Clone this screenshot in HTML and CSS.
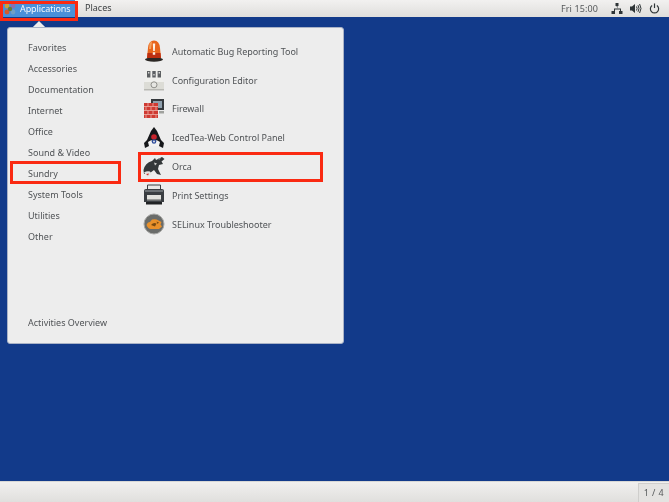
FILE: index.html
```html
<!DOCTYPE html>
<html lang="en">
<head>
<meta charset="utf-8">
<title>GNOME Applications menu</title>
<link rel="stylesheet" href="styles.css">
</head>
<body>
<div class="desktop">
  <header class="topbar">
    <div class="panel-left">
      <div class="apps-button">
        <svg class="foot" viewBox="0 0 12 12" width="12" height="12"><circle cx="3" cy="3" r="2.400" fill="#c9a13c"/><circle cx="9" cy="3" r="2.400" fill="#8a6fb0"/><circle cx="3" cy="9" r="2.400" fill="#d7592e"/><circle cx="9" cy="9" r="2.400" fill="#6fa0c8"/><circle cx="6" cy="6" r="2.200" fill="#6b7a3a"/></svg>
        <span class="apps-label">Applications</span>
      </div>
      <span class="places">Places</span>
    </div>
    <div class="panel-right">
      <span class="clock">Fri 15:00</span>
      <svg class="status net" viewBox="0 0 12 11" width="12" height="11"><path d="M4.500 0h3v3h-3zM5.500 3h1v2.500h3.500V8h-1V6.500h-5V8h-1V5.500h3.500zM0.500 8h3.500v3H.5zM8 8h3.500v3H8z" fill="#2e3436"/></svg>
      <svg class="status vol" viewBox="0 0 12 11" width="12" height="11"><path d="M0 3.500h2L5 1v9L2 7.500H0z" fill="#2e3436"/><path d="M6.500 3.500q1.200 2 0 4M8 2.200q2 3.300 0 6.600M9.600 1q2.800 4.500 0 9" fill="none" stroke="#2e3436" stroke-width="1"/></svg>
      <svg class="status power" viewBox="0 0 12 12" width="11" height="11"><path d="M3.400 2.700a4.500 4.500 0 1 0 5.200 0" fill="none" stroke="#2e3436" stroke-width="1.300"/><path d="M6 .5v5" stroke="#2e3436" stroke-width="1.300"/></svg>
    </div>
  </header>

  <main class="workspace">
    <div class="menu-arrow"></div>
    <section class="menu">
      <nav class="categories">
        <ul class="category-list">
          <li>Favorites</li>
          <li>Accessories</li>
          <li>Documentation</li>
          <li>Internet</li>
          <li>Office</li>
          <li>Sound &amp; Video</li>
          <li>Sundry</li>
          <li>System Tools</li>
          <li>Utilities</li>
          <li>Other</li>
        </ul>
        <div class="overview">Activities Overview</div>
      </nav>
      <ul class="apps">
        <li>
          <svg viewBox="0 0 22 22" width="22" height="22"><ellipse cx="11" cy="19.500" rx="9" ry="2.200" fill="#2b2724"/><path d="M4 18 5 8q.6-7.500 6-7.500T17 8l1 10z" fill="#e8651c"/><path d="M4 18l.5-5h13l.5 5z" fill="#bd2f10"/><path d="M6.500 3.500Q8 1.500 9 1.500L8 9H6z" fill="#f6a05a"/><path d="M9.800 3.500h2.400l-.4 7.500h-1.600zM9.800 12.300h2.400v2.400H9.800z" fill="#fdf2e6"/></svg>
          <span>Automatic Bug Reporting Tool</span>
        </li>
        <li>
          <svg viewBox="0 0 22 22" width="22" height="22"><path d="M3 0.500h16l1 13H2z" fill="#efefec"/><path d="M1 13h20v7.500H1z" fill="#dcdcd6"/><path d="M1 20h20v1.500H1z" fill="#b9b9b4"/><path d="M4 2h3.400v6.500H4zM9.300 2h3.400v6.500H9.300zM14.600 2h3.400v6.500h-3.400z" fill="#5c5f62"/><path d="M5 3h1.400v1.500H5zM10.300 5h1.400v1.500h-1.400zM15.600 3h1.400v1.500h-1.400z" fill="#d8d8d5"/><circle cx="11" cy="15.800" r="3" fill="#e6e6e2" stroke="#8f8f8a" stroke-width="1"/></svg>
          <span>Configuration Editor</span>
        </li>
        <li>
          <svg viewBox="0 0 22 22" width="22" height="22"><path d="M8 1h13v11H8z" fill="#34383c"/><path d="M10 3h9v7h-9z" fill="#8fa0ae"/><path d="M16 13h5v2.500h-5z" fill="#a0a29e"/><path d="M1 5h14v15H1z" fill="#cf3a32"/><path d="M1 8.500h14M1 12.500h14M1 16.500h14M5 5v3.500M10 5v3.500M3 8.500v4M8 8.500v4M13 8.500v4M5 12.500v4M10 12.500v4M3 16.500v3.500M8 16.500v3.500M13 16.500v3.500" stroke="#eeb0a8" stroke-width=".8" fill="none"/></svg>
          <span>Firewall</span>
        </li>
        <li>
          <svg viewBox="0 0 22 22" width="22" height="22"><path d="M2 21 1 16l3-3 4-9 3-4 3 4 4 9 3 3-1 5-4-2H6z" fill="#15171a"/><path d="M5 15q6-5 12 0l-1 4H6z" fill="#f2f2f2"/><path d="M7 9.500q4-2 8 0l1 3q-5 2-10 0z" fill="#1a1c20"/><circle cx="11" cy="10" r="2.800" fill="#c8242c"/><circle cx="11" cy="14.500" r="2.300" fill="#2b4a9a"/><circle cx="11" cy="14.500" r=".9" fill="#f2f2f2"/></svg>
          <span>IcedTea-Web Control Panel</span>
        </li>
        <li>
          <svg viewBox="0 0 22 22" width="22" height="22"><path d="M.5 14Q2 7 9 5l3-3 1 2 6-3 2.500 2-3 2.500L20 8l-4 1-1 4 3 6-4-1-3-4-4 3-6 1z" fill="#34383a"/><path d="M1 16.500q3-2 6-1l2 3-5 2z" fill="#e6e6e4"/><path d="M3 18l3-.5-1 2z" fill="#c8302c"/><path d="M11 6.500l3 1-2 2z" fill="#cfcfcd"/><path d="M15 2.500l3-.5-2 2z" fill="#8a8e90"/></svg>
          <span>Orca</span>
        </li>
        <li>
          <svg viewBox="0 0 22 22" width="22" height="22"><path d="M4.500 1h13v6h-13z" fill="#e8e8e6" stroke="#3a3e40" stroke-width="1"/><path d="M1 6.500q0-1.500 2-1.500h16q2 0 2 1.500V18H1z" fill="#3a3e42"/><path d="M2 6h18v2H2z" fill="#6b7074"/><path d="M4 11h14v4H4z" fill="#e2e2de"/><path d="M4 15h14v1.500H4z" fill="#9a9c9a"/><path d="M3 18h16v2.500H3z" fill="#202224"/></svg>
          <span>Print Settings</span>
        </li>
        <li>
          <svg viewBox="0 0 22 22" width="22" height="22"><circle cx="11" cy="11" r="10" fill="#6a6c6a" stroke="#a8a8a6" stroke-width="1"/><path d="M3.500 12q1-3 3.500-3l2-2.500q4-1 6.500 1L18.500 9l-1 2.500 1.500 2-3 2.500H8q-3 0-4.500-4z" fill="#e9902a"/><path d="M8 12q2.500-3 5.500-1.500L12 13.500z" fill="#7a4a10"/><path d="M13.500 8.500l2.500 1-1.500 1.500z" fill="#7a4a10"/></svg>
          <span>SELinux Troubleshooter</span>
        </li>
      </ul>
    </section>
  </main>

  <footer class="bottombar">
    <div class="pager">1 / 4</div>
  </footer>

  <div class="mark mark-apps"></div>
  <div class="mark mark-sundry"></div>
  <div class="mark mark-orca"></div>
</div>
</body>
</html>
```
FILE: styles.css
```css
* { box-sizing: border-box; }
html, body { margin: 0; height: 100%; }
body { font-family: "Noto Sans", "Open Sans", sans-serif; font-size: 9px; color: #505356; }
ul { list-style: none; margin: 0; padding: 0; }

.desktop { position: relative; width: 669px; height: 502px; display: flex; flex-direction: column; background: #123a8a; overflow: hidden; filter: blur(.3px); }

.topbar { height: 17px; flex: none; display: flex; justify-content: space-between; background: linear-gradient(#f2f1f0, #dfdedc); color: #3c3f41; }
.panel-left { display: flex; align-items: stretch; }
.apps-button { display: flex; align-items: center; gap: 4px; width: 75px; padding-left: 4px; background: #4a90d9; color: #f4f7fb; }
.apps-label { letter-spacing: -.1px; }
.places { margin-left: 10px; line-height: 16px; }
.panel-right { display: flex; align-items: center; }
.clock { margin-right: 13px; color: #55585a; letter-spacing: .1px; }
.status { margin-right: 7px; }
.status.power { margin-right: 9px; }

.workspace { flex: 1; position: relative; padding: 10px 0 0 7px; }
.menu-arrow { position: absolute; left: 34px; top: 6px; width: 10px; height: 10px; background: #ededed; transform: rotate(45deg); }
.menu { position: relative; width: 337px; height: 317px; display: flex; background: #ededed; border: 1px solid #a9b2c6; border-radius: 3px; }

.categories { width: 131px; flex: none; display: flex; flex-direction: column; justify-content: space-between; padding: 9px 0 10px 20px; }
.category-list li { height: 21px; line-height: 21px; }
.overview { line-height: 21px; }

.apps { padding: 9px 0 0 3px; flex: 1; }
.apps li { height: 28.8px; display: flex; align-items: center; gap: 5px; }
.apps svg { display: block; margin-left: 1px; }
.apps span { margin-left: 2px; letter-spacing: -.03px; }

.bottombar { height: 21px; flex: none; display: flex; justify-content: flex-end; align-items: flex-end; background: linear-gradient(#f1f0ef, #e0dfdd); border-top: 1px solid #d8d8d6; }
.pager { width: 31px; height: 19px; text-align: center; line-height: 18px; letter-spacing: .4px; background: #e4e3e1; border: 1px solid #cfcecc; border-right: 0; border-bottom: 0; color: #56595b; }

.mark { position: absolute; border: 3px solid #fa2a12; pointer-events: none; }
.mark-apps { left: 0; top: 1px; width: 78px; height: 20px; }
.mark-sundry { left: 10px; top: 161px; width: 111px; height: 23px; }
.mark-orca { left: 138px; top: 152px; width: 185px; height: 30px; }
```
